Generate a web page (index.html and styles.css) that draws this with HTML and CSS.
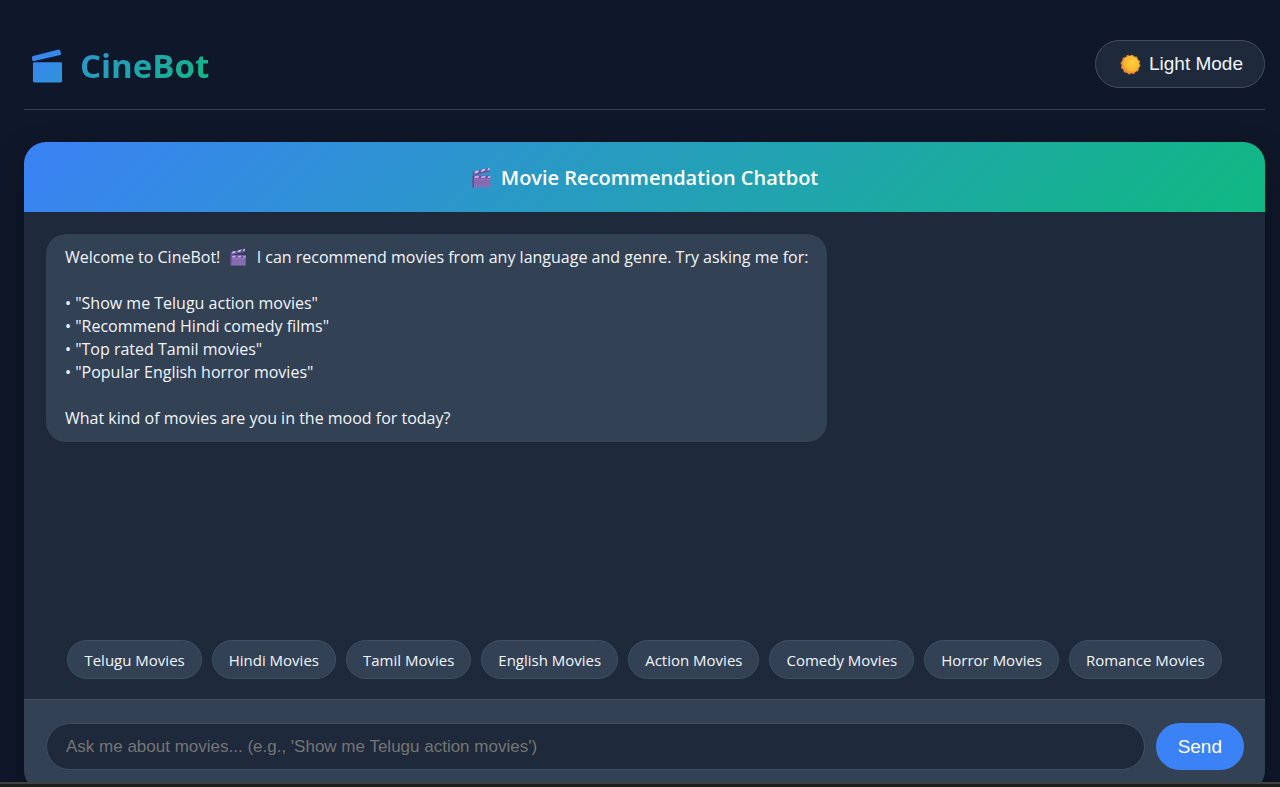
FILE: index.html
```html
<!DOCTYPE html>
<html lang="en">
<head>
<meta charset="utf-8">
<meta name="viewport" content="width=device-width, initial-scale=1">
<title>CineBot</title>
<link rel="stylesheet" href="styles.css">
</head>
<body>
<svg class="defs" aria-hidden="true">
  <defs>
    <linearGradient id="clapFill" x1="0" y1="0" x2="0" y2="1"><stop offset="0" stop-color="#a07fcb"/><stop offset=".5" stop-color="#8668ae"/><stop offset="1" stop-color="#8274b8"/></linearGradient>
    <linearGradient id="logoFill" gradientUnits="userSpaceOnUse" x1="0" y1="0" x2="32" y2="36"><stop offset="0" stop-color="#3b82f6"/><stop offset="1" stop-color="#2f94d6"/></linearGradient>
    <radialGradient id="sunFill" cx=".6" cy=".4" r=".6"><stop offset="0" stop-color="#ffd23c"/><stop offset=".7" stop-color="#fbb631"/><stop offset="1" stop-color="#f08f2a"/></radialGradient>
    <symbol id="clapper" viewBox="0 0 20 20">
      <path d="M1.500 4.600 17.500 .8 18 4.200 2 8z" fill="#6d5299"/>
      <path d="M4 4 7.500 3.200 6.600 5.400 3.200 6.200zM10.500 2.400 14 1.600 12.700 3.900 9.300 4.700zM16.400 1.100 17.500 .8 17.800 2.800 15.400 3.400z" fill="#d8c8ff"/>
      <rect x="1.500" y="8" width="17" height="11.500" rx="1" fill="url(#clapFill)"/>
      <path d="M1.500 8h17v3h-17z" fill="#6d5299"/>
      <path d="M4 8.500h4l-1.200 2H2.800zM10.500 8.500h3.700l-1.200 2H9.200zM16.500 8.500h2v2h-3z" fill="#bda9ea"/>
      <path d="M1.500 8h1.200v11.500H1.500z" fill="#594584"/>
    </symbol>
  </defs>
</svg>
<div class="page">
  <header class="topbar">
    <h1 class="brand">
      <svg class="brand-icon" viewBox="0 0 32 36" aria-hidden="true">
        <path d="M1.200 7.800 26.600 1.100a2.200 2.200 0 0 1 2.600 1.500l.9 3.800L1.400 13.200a1.300 1.300 0 0 1-1-.9L0 10.300a2 2 0 0 1 1.200-2.500z" fill="url(#logoFill)"/>
        <rect x="1" y="14" width="30" height="21" rx="1.500" fill="url(#logoFill)"/>
      </svg>
      <span class="brand-name">CineBot</span>
    </h1>
    <button type="button" class="mode">
      <svg class="sun" viewBox="0 0 20 20" aria-hidden="true">
        <circle cx="10" cy="10" r="8.600" fill="url(#sunFill)"/>
        <circle cx="10" cy="10" r="8.800" fill="none" stroke="#e98a35" stroke-width="1.200" stroke-dasharray="2.600 2.008"/>
      </svg>
      Light Mode
    </button>
  </header>
  <main class="chat">
    <h2 class="chat-title"><svg class="title-icon" aria-hidden="true"><use href="#clapper"/></svg>Movie Recommendation Chatbot</h2>
    <section class="messages" aria-label="Conversation">
      <div class="bubble">
        <p class="line">Welcome to CineBot! <svg class="text-icon" aria-hidden="true"><use href="#clapper"/></svg> I can recommend movies from any language and genre. Try asking me for:</p>
        <p class="line block">• "Show me Telugu action movies"<br>• "Recommend Hindi comedy films"<br>• "Top rated Tamil movies"<br>• "Popular English horror movies"</p>
        <p class="line">What kind of movies are you in the mood for today?</p>
      </div>
    </section>
    <nav class="chips" aria-label="Suggestions">
      <button type="button" class="chip">Telugu Movies</button>
      <button type="button" class="chip">Hindi Movies</button>
      <button type="button" class="chip">Tamil Movies</button>
      <button type="button" class="chip">English Movies</button>
      <button type="button" class="chip">Action Movies</button>
      <button type="button" class="chip">Comedy Movies</button>
      <button type="button" class="chip">Horror Movies</button>
      <button type="button" class="chip">Romance Movies</button>
    </nav>
    <form class="composer">
      <input class="field" type="text" aria-label="Message" placeholder="Ask me about movies... (e.g., 'Show me Telugu action movies')">
      <button type="button" class="send">Send</button>
    </form>
  </main>
</div>
<footer class="edge"></footer>
</body>
</html>
```
FILE: styles.css
```css
* { box-sizing: border-box; }
body {
  margin: 0;
  height: 100vh;
  display: flex;
  flex-direction: column;
  overflow: hidden;
  background: #0f172a;
  color: #f1f5f9;
  font-family: "Segoe UI", "Open Sans", "Noto Sans", sans-serif;
}
.defs { position: absolute; width: 0; height: 0; }
.page {
  flex: 1;
  min-height: 0;
  overflow: hidden;
  padding: 24px 15px 0 24px;
}
.topbar {
  display: flex;
  justify-content: space-between;
  align-items: center;
  padding: 16px 0 21px;
  margin-bottom: 32px;
  border-bottom: 1px solid #334155;
}
.brand {
  display: flex;
  align-items: center;
  gap: 17px;
  margin: 0 0 0 8px;
  padding-top: 4px;
  font-size: 33px;
  line-height: 44px;
  font-weight: 700;
}
.brand-icon { width: 31px; height: 36px; }
.brand-name {
  background: linear-gradient(135deg, #2e93cf, #10b981);
  -webkit-background-clip: text;
  background-clip: text;
  color: transparent;
}
.mode {
  display: flex;
  align-items: center;
  gap: 8px;
  height: 48px;
  padding: 0 21px 0 24px;
  border: 1px solid #414f63;
  border-radius: 24px;
  background: #1e293b;
  color: #f1f5f9;
  font: 19px "Liberation Sans", Arial, sans-serif;
}
.sun { width: 21px; height: 21px; }
.chat {
  display: flex;
  flex-direction: column;
  height: calc(100vh - 137px);
  border-radius: 22px;
  overflow: hidden;
  background: #1e293b;
  box-shadow: 0 10px 30px rgba(0, 0, 0, 0.3);
}
.chat-title {
  display: flex;
  justify-content: center;
  align-items: center;
  gap: 9px;
  flex: none;
  height: 70px;
  margin: 0;
  background: linear-gradient(135deg, #3b82f6, #10b981);
  color: #fff;
  font-size: 20px;
  font-weight: 600;
}
.title-icon { width: 21px; height: 21px; }
.messages {
  flex: 1;
  min-height: 0;
  padding: 22px;
}
.bubble {
  width: fit-content;
  max-width: 80%;
  padding: 12px 19px;
  border-radius: 20px;
  background: #334155;
}
.line {
  margin: 0;
  font-size: 16px;
  line-height: 23px;
}
.block { margin: 23px 0; }
.text-icon { width: 18px; height: 18px; margin: 0 5px; vertical-align: -3px; }
.chips {
  display: flex;
  flex-wrap: wrap;
  justify-content: center;
  gap: 10px;
  padding: 0 20px 20px;
}
.chip {
  height: 39px;
  padding: 0 16px;
  border: 1px solid #414f63;
  border-radius: 20px;
  background: #334155;
  color: #f1f5f9;
  font: 15px "Segoe UI", "Open Sans", "Noto Sans", sans-serif;
}
.composer {
  display: flex;
  gap: 11px;
  padding: 23px 21px 22px 22px;
  border-top: 1px solid #414f63;
  background: #334155;
}
.field {
  flex: 1;
  min-width: 0;
  height: 47px;
  padding: 0 19px;
  border: 1px solid #414f63;
  border-radius: 24px;
  background: #1e293b;
  color: #f1f5f9;
  font: 17px "Liberation Sans", Arial, sans-serif;
}
.field::placeholder { color: #757575; }
.send {
  height: 47px;
  padding: 0 22px;
  border: 0;
  border-radius: 24px;
  background: #3b82f6;
  color: #fff;
  font: 19px "Liberation Sans", Arial, sans-serif;
}
.edge {
  flex: none;
  height: 5px;
  border-top: 2px solid #414141;
  background: #1d1d1d;
}
```
